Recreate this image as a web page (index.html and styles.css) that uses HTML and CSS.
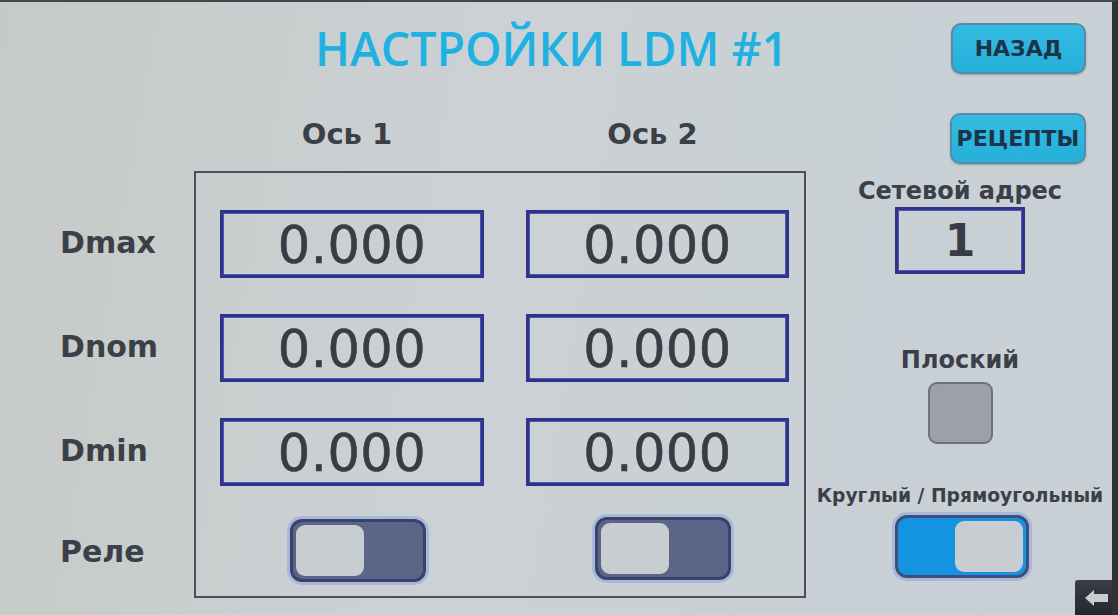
FILE: index.html
```html
<!DOCTYPE html>
<html lang="ru">
<head>
<meta charset="utf-8">
<title>НАСТРОЙКИ LDM #1</title>
<link rel="stylesheet" href="styles.css">
</head>
<body>
<div class="screen">
  <div class="main">
    <div class="header"><h1 class="title">НАСТРОЙКИ LDM #1</h1></div>
    <div class="axes">
      <div class="axis">Ось 1</div>
      <div class="axis">Ось 2</div>
    </div>
    <div class="body">
      <div class="labels">
        <div class="label">Dmax</div>
        <div class="label">Dnom</div>
        <div class="label">Dmin</div>
        <div class="label relay">Реле</div>
      </div>
      <div class="box">
        <div class="field">0.000</div>
        <div class="field">0.000</div>
        <div class="field">0.000</div>
        <div class="field">0.000</div>
        <div class="field">0.000</div>
        <div class="field">0.000</div>
        <div class="toggle off t1"><span class="knob"></span></div>
        <div class="toggle off t2"><span class="knob"></span></div>
      </div>
    </div>
  </div>
  <aside class="side">
    <button class="btn btn-back">НАЗАД</button>
    <button class="btn btn-recipes">РЕЦЕПТЫ</button>
    <div class="side-label net">Сетевой адрес</div>
    <div class="addr">1</div>
    <div class="side-label flat">Плоский</div>
    <div class="check"></div>
    <div class="side-label small">Круглый / Прямоугольный</div>
    <div class="toggle on"><span class="knob"></span></div>
  </aside>
  <div class="corner">
    <svg width="26" height="18" viewBox="0 0 26 18"><path d="M1 9 L10 1 L10 5 L24 5 L24 13 L10 13 L10 17 Z" fill="#c9ccd0"/></svg>
  </div>
</div>
</body>
</html>
```

FILE: styles.css
```css
html, body {
  margin: 0;
  padding: 0;
  background: #c9d0d3;
}

.screen {
  position: relative;
  width: 1118px;
  height: 615px;
  box-sizing: border-box;
  border-top: 2px solid #43464d;
  border-right: 6px solid #2e3138;
  display: flex;
  background: linear-gradient(100deg, #c6cac7 0%, #cbd1d4 40%, #c8d0d6 100%);
  font-family: "DejaVu Sans", "Open Sans", sans-serif;
  color: #3b3f47;
  overflow: hidden;
}

.main {
  width: 806px;
  display: flex;
  flex-direction: column;
}

.header {
  height: 98px;
  box-sizing: border-box;
  padding-top: 18px;
  padding-left: 315px;
}

.title {
  margin: 0;
  font-family: "Open Sans", "DejaVu Sans", sans-serif;
  font-size: 46.5px;
  line-height: 56px;
  font-weight: 600;
  color: #1fb1e2;
  white-space: nowrap;
}

.axes {
  height: 71px;
  margin-left: 220px;
  display: grid;
  grid-template-columns: 264px 263px;
  column-gap: 42px;
  align-items: start;
}

.axis {
  text-align: center;
  font-size: 29px;
  font-weight: 700;
  line-height: 40px;
  padding-top: 14px;
  padding-right: 10px;
}

.body {
  display: flex;
  height: 427px;
}

.labels {
  width: 194px;
  box-sizing: border-box;
  padding-top: 37px;
  padding-left: 60px;
  display: grid;
  grid-template-rows: 68px 68px 68px 68px;
  row-gap: 36px;
  align-content: start;
}

.label {
  font-size: 30px;
  font-weight: 700;
  display: flex;
  align-items: center;
}

.label.relay {
  margin-top: -6px;
}

.box {
  width: 612px;
  height: 427px;
  box-sizing: border-box;
  border: 2px solid #4b4f58;
  padding: 37px 15px 0 24px;
  display: grid;
  grid-template-columns: 264px 263px;
  grid-template-rows: 68px 68px 68px 68px;
  column-gap: 42px;
  row-gap: 36px;
  align-content: start;
}

.field {
  box-sizing: border-box;
  border: 3px solid #2f3386;
  box-shadow: inset 0 0 0 1px #4a56b8;
  display: flex;
  align-items: center;
  justify-content: center;
  font-family: "DejaVu Sans", sans-serif;
  font-size: 51px;
  color: #383c44;
  -webkit-text-stroke: 0.6px #383c44;
  letter-spacing: 0.5px;
  padding-top: 2px;
}

.toggle {
  width: 136px;
  height: 63px;
  box-sizing: border-box;
  border-radius: 12px;
  border: 3px solid #3b4468;
  box-shadow: 0 0 0 3px #a7b9da;
  background: #5c6587;
  position: relative;
  align-self: start;
}

.toggle.t1 {
  justify-self: center;
  margin-top: -3px;
  margin-left: 12px;
}

.toggle.t2 {
  justify-self: center;
  margin-top: -5px;
  margin-left: 10px;
}

.knob {
  position: absolute;
  top: 3px;
  bottom: 3px;
  width: 68px;
  border-radius: 9px;
  background: #c7cdd0;
}

.toggle.off .knob { left: 3px; }
.toggle.on .knob { right: 3px; }

.toggle.on {
  width: 134px;
  align-self: center;
  background: #1593e3;
  border-color: #3f4f78;
  margin-top: 6px;
  margin-left: 4px;
}

.side {
  width: 306px;
  display: flex;
  flex-direction: column;
  align-items: center;
  padding-left: 2px;
  box-sizing: border-box;
}

.btn {
  align-self: flex-end;
  margin-right: 26px;
  height: 51px;
  box-sizing: border-box;
  border: 2px solid #5a88a8;
  border-radius: 10px;
  background: linear-gradient(#33bbe2, #26b0da);
  box-shadow: 0 1px 2px rgba(40, 60, 80, 0.35);
  font-family: "DejaVu Sans", sans-serif;
  font-weight: 700;
  font-size: 22px;
  color: #1c3448;
  padding: 0;
}

.btn-back {
  width: 135px;
  margin-top: 21px;
}

.btn-recipes {
  width: 136px;
  margin-top: 39px;
}

.side-label {
  font-weight: 700;
  white-space: nowrap;
}

.net {
  font-size: 24px;
  line-height: 32px;
  margin-top: 11px;
}

.addr {
  width: 130px;
  height: 67px;
  box-sizing: border-box;
  border: 3px solid #2f3386;
  box-shadow: inset 0 0 0 1px #4a56b8;
  margin-top: 0;
  display: flex;
  align-items: center;
  justify-content: center;
  font-family: "DejaVu Sans", sans-serif;
  font-weight: 700;
  font-size: 44px;
  color: #383c44;
}

.flat {
  font-size: 24px;
  line-height: 32px;
  margin-top: 70px;
}

.check {
  width: 65px;
  height: 62px;
  box-sizing: border-box;
  border: 2px solid #6d7283;
  border-radius: 9px;
  background: #9ba0ab;
  margin-top: 6px;
}

.small {
  font-size: 18.7px;
  line-height: 26px;
  margin-top: 39px;
}

.corner {
  position: absolute;
  right: -6px;
  bottom: 0;
  width: 43px;
  height: 35px;
  background: linear-gradient(#3a3d48, #25272e);
  border-top-left-radius: 3px;
  display: flex;
  align-items: center;
  justify-content: center;
}
```
